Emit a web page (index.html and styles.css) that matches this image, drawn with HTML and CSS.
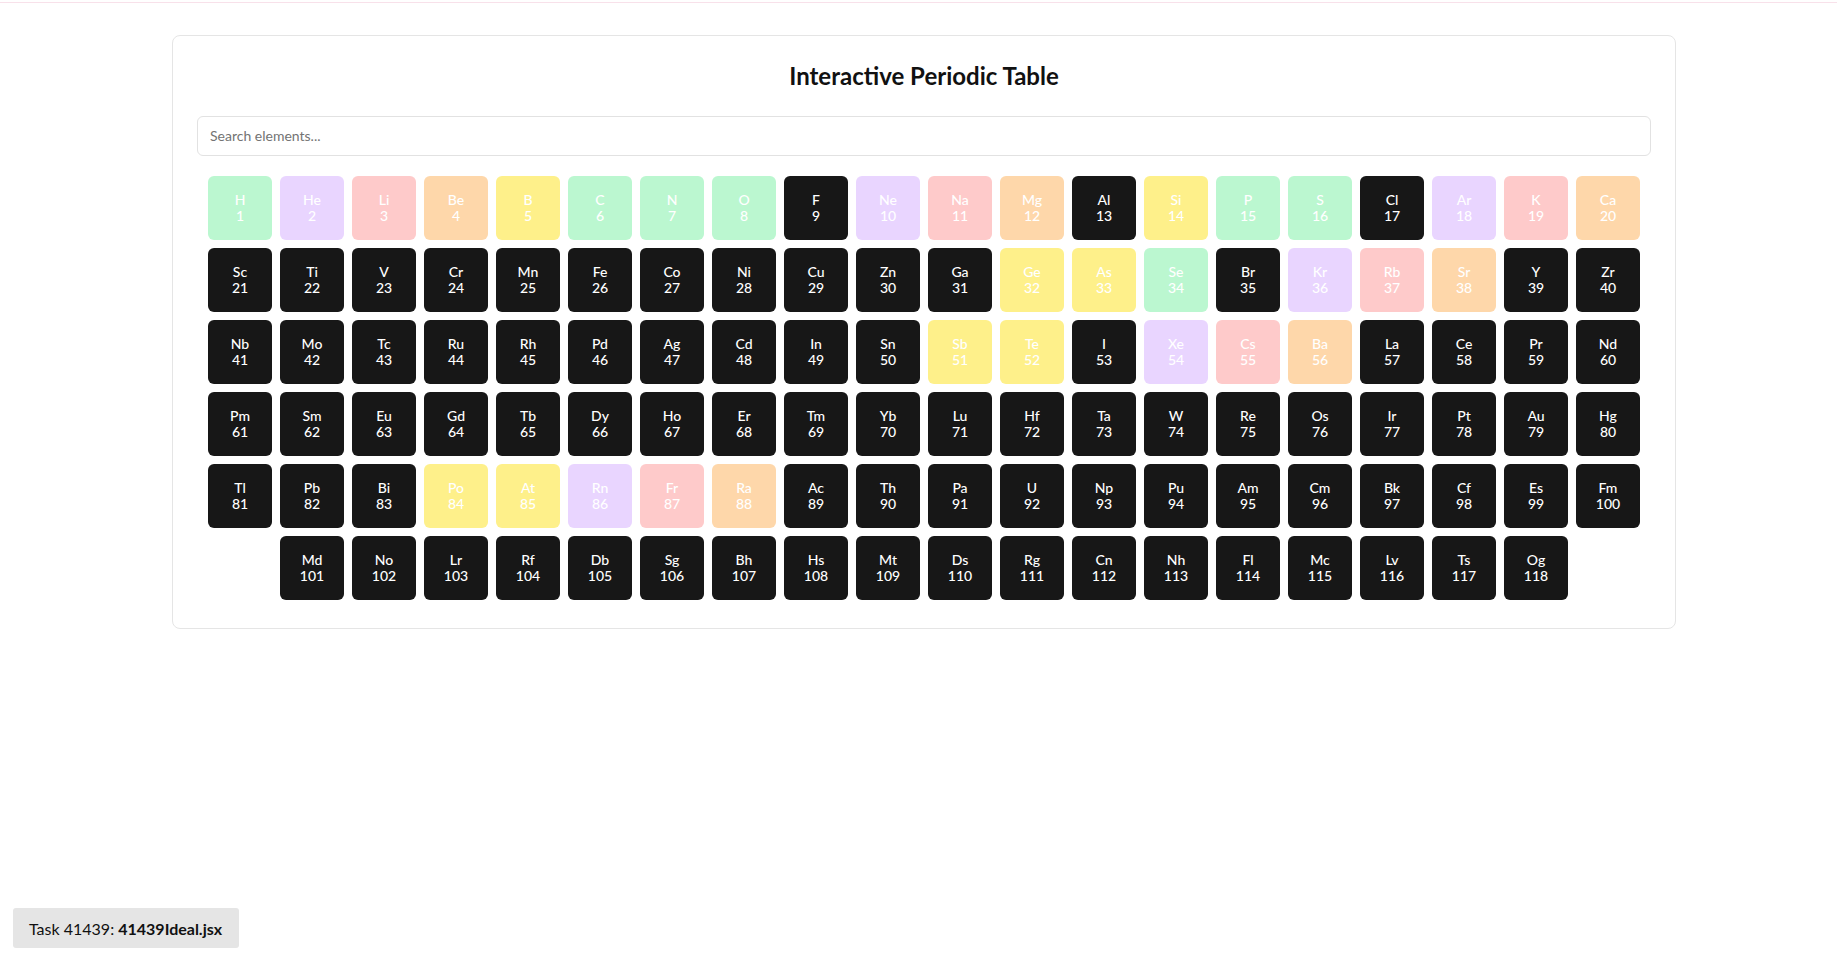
FILE: index.html
```html
<!DOCTYPE html>
<html lang="en">
<head>
<meta charset="utf-8">
<title>Interactive Periodic Table</title>
<link rel="stylesheet" href="styles.css">
</head>
<body>
<div class="topline"></div>
<main class="page">
  <section class="card">
    <h1 class="title">Interactive Periodic Table</h1>
    <input class="search" type="text" placeholder="Search elements...">
    <div class="grid">
      <div class="tile t-green"><span>H</span><span>1</span></div>
      <div class="tile t-purple"><span>He</span><span>2</span></div>
      <div class="tile t-red"><span>Li</span><span>3</span></div>
      <div class="tile t-orange"><span>Be</span><span>4</span></div>
      <div class="tile t-yellow"><span>B</span><span>5</span></div>
      <div class="tile t-green"><span>C</span><span>6</span></div>
      <div class="tile t-green"><span>N</span><span>7</span></div>
      <div class="tile t-green"><span>O</span><span>8</span></div>
      <div class="tile t-dark"><span>F</span><span>9</span></div>
      <div class="tile t-purple"><span>Ne</span><span>10</span></div>
      <div class="tile t-red"><span>Na</span><span>11</span></div>
      <div class="tile t-orange"><span>Mg</span><span>12</span></div>
      <div class="tile t-dark"><span>Al</span><span>13</span></div>
      <div class="tile t-yellow"><span>Si</span><span>14</span></div>
      <div class="tile t-green"><span>P</span><span>15</span></div>
      <div class="tile t-green"><span>S</span><span>16</span></div>
      <div class="tile t-dark"><span>Cl</span><span>17</span></div>
      <div class="tile t-purple"><span>Ar</span><span>18</span></div>
      <div class="tile t-red"><span>K</span><span>19</span></div>
      <div class="tile t-orange"><span>Ca</span><span>20</span></div>
      <div class="tile t-dark"><span>Sc</span><span>21</span></div>
      <div class="tile t-dark"><span>Ti</span><span>22</span></div>
      <div class="tile t-dark"><span>V</span><span>23</span></div>
      <div class="tile t-dark"><span>Cr</span><span>24</span></div>
      <div class="tile t-dark"><span>Mn</span><span>25</span></div>
      <div class="tile t-dark"><span>Fe</span><span>26</span></div>
      <div class="tile t-dark"><span>Co</span><span>27</span></div>
      <div class="tile t-dark"><span>Ni</span><span>28</span></div>
      <div class="tile t-dark"><span>Cu</span><span>29</span></div>
      <div class="tile t-dark"><span>Zn</span><span>30</span></div>
      <div class="tile t-dark"><span>Ga</span><span>31</span></div>
      <div class="tile t-yellow"><span>Ge</span><span>32</span></div>
      <div class="tile t-yellow"><span>As</span><span>33</span></div>
      <div class="tile t-green"><span>Se</span><span>34</span></div>
      <div class="tile t-dark"><span>Br</span><span>35</span></div>
      <div class="tile t-purple"><span>Kr</span><span>36</span></div>
      <div class="tile t-red"><span>Rb</span><span>37</span></div>
      <div class="tile t-orange"><span>Sr</span><span>38</span></div>
      <div class="tile t-dark"><span>Y</span><span>39</span></div>
      <div class="tile t-dark"><span>Zr</span><span>40</span></div>
      <div class="tile t-dark"><span>Nb</span><span>41</span></div>
      <div class="tile t-dark"><span>Mo</span><span>42</span></div>
      <div class="tile t-dark"><span>Tc</span><span>43</span></div>
      <div class="tile t-dark"><span>Ru</span><span>44</span></div>
      <div class="tile t-dark"><span>Rh</span><span>45</span></div>
      <div class="tile t-dark"><span>Pd</span><span>46</span></div>
      <div class="tile t-dark"><span>Ag</span><span>47</span></div>
      <div class="tile t-dark"><span>Cd</span><span>48</span></div>
      <div class="tile t-dark"><span>In</span><span>49</span></div>
      <div class="tile t-dark"><span>Sn</span><span>50</span></div>
      <div class="tile t-yellow"><span>Sb</span><span>51</span></div>
      <div class="tile t-yellow"><span>Te</span><span>52</span></div>
      <div class="tile t-dark"><span>I</span><span>53</span></div>
      <div class="tile t-purple"><span>Xe</span><span>54</span></div>
      <div class="tile t-red"><span>Cs</span><span>55</span></div>
      <div class="tile t-orange"><span>Ba</span><span>56</span></div>
      <div class="tile t-dark"><span>La</span><span>57</span></div>
      <div class="tile t-dark"><span>Ce</span><span>58</span></div>
      <div class="tile t-dark"><span>Pr</span><span>59</span></div>
      <div class="tile t-dark"><span>Nd</span><span>60</span></div>
      <div class="tile t-dark"><span>Pm</span><span>61</span></div>
      <div class="tile t-dark"><span>Sm</span><span>62</span></div>
      <div class="tile t-dark"><span>Eu</span><span>63</span></div>
      <div class="tile t-dark"><span>Gd</span><span>64</span></div>
      <div class="tile t-dark"><span>Tb</span><span>65</span></div>
      <div class="tile t-dark"><span>Dy</span><span>66</span></div>
      <div class="tile t-dark"><span>Ho</span><span>67</span></div>
      <div class="tile t-dark"><span>Er</span><span>68</span></div>
      <div class="tile t-dark"><span>Tm</span><span>69</span></div>
      <div class="tile t-dark"><span>Yb</span><span>70</span></div>
      <div class="tile t-dark"><span>Lu</span><span>71</span></div>
      <div class="tile t-dark"><span>Hf</span><span>72</span></div>
      <div class="tile t-dark"><span>Ta</span><span>73</span></div>
      <div class="tile t-dark"><span>W</span><span>74</span></div>
      <div class="tile t-dark"><span>Re</span><span>75</span></div>
      <div class="tile t-dark"><span>Os</span><span>76</span></div>
      <div class="tile t-dark"><span>Ir</span><span>77</span></div>
      <div class="tile t-dark"><span>Pt</span><span>78</span></div>
      <div class="tile t-dark"><span>Au</span><span>79</span></div>
      <div class="tile t-dark"><span>Hg</span><span>80</span></div>
      <div class="tile t-dark"><span>Tl</span><span>81</span></div>
      <div class="tile t-dark"><span>Pb</span><span>82</span></div>
      <div class="tile t-dark"><span>Bi</span><span>83</span></div>
      <div class="tile t-yellow"><span>Po</span><span>84</span></div>
      <div class="tile t-yellow"><span>At</span><span>85</span></div>
      <div class="tile t-purple"><span>Rn</span><span>86</span></div>
      <div class="tile t-red"><span>Fr</span><span>87</span></div>
      <div class="tile t-orange"><span>Ra</span><span>88</span></div>
      <div class="tile t-dark"><span>Ac</span><span>89</span></div>
      <div class="tile t-dark"><span>Th</span><span>90</span></div>
      <div class="tile t-dark"><span>Pa</span><span>91</span></div>
      <div class="tile t-dark"><span>U</span><span>92</span></div>
      <div class="tile t-dark"><span>Np</span><span>93</span></div>
      <div class="tile t-dark"><span>Pu</span><span>94</span></div>
      <div class="tile t-dark"><span>Am</span><span>95</span></div>
      <div class="tile t-dark"><span>Cm</span><span>96</span></div>
      <div class="tile t-dark"><span>Bk</span><span>97</span></div>
      <div class="tile t-dark"><span>Cf</span><span>98</span></div>
      <div class="tile t-dark"><span>Es</span><span>99</span></div>
      <div class="tile t-dark"><span>Fm</span><span>100</span></div>
      <div class="tile t-dark"><span>Md</span><span>101</span></div>
      <div class="tile t-dark"><span>No</span><span>102</span></div>
      <div class="tile t-dark"><span>Lr</span><span>103</span></div>
      <div class="tile t-dark"><span>Rf</span><span>104</span></div>
      <div class="tile t-dark"><span>Db</span><span>105</span></div>
      <div class="tile t-dark"><span>Sg</span><span>106</span></div>
      <div class="tile t-dark"><span>Bh</span><span>107</span></div>
      <div class="tile t-dark"><span>Hs</span><span>108</span></div>
      <div class="tile t-dark"><span>Mt</span><span>109</span></div>
      <div class="tile t-dark"><span>Ds</span><span>110</span></div>
      <div class="tile t-dark"><span>Rg</span><span>111</span></div>
      <div class="tile t-dark"><span>Cn</span><span>112</span></div>
      <div class="tile t-dark"><span>Nh</span><span>113</span></div>
      <div class="tile t-dark"><span>Fl</span><span>114</span></div>
      <div class="tile t-dark"><span>Mc</span><span>115</span></div>
      <div class="tile t-dark"><span>Lv</span><span>116</span></div>
      <div class="tile t-dark"><span>Ts</span><span>117</span></div>
      <div class="tile t-dark"><span>Og</span><span>118</span></div>
    </div>
  </section>
</main>
<div class="task">Task 41439:&nbsp;<b>41439Ideal.jsx</b></div>
</body>
</html>
```

FILE: styles.css
```css
* { box-sizing: border-box; }
html, body { margin: 0; padding: 0; background: #ffffff; }
body {
  font-family: Lato, "Open Sans", Arial, sans-serif;
  color: #111111;
}
.topline {
  height: 1px;
  margin-top: 2px;
  background: #f8e1ea;
}
.page {
  padding: 32px 161px 40px 172px;
}
.card {
  border: 1px solid #e5e5e5;
  border-radius: 8px;
  padding: 24px;
  background: #ffffff;
}
.title {
  margin: 0 0 24px 0;
  text-align: center;
  font-size: 24px;
  line-height: 32px;
  font-weight: 700;
  color: #111111;
}
.search {
  display: block;
  width: 100%;
  height: 40px;
  padding: 0 12px 1px 12px;
  border: 1px solid #e2e2e2;
  border-radius: 6px;
  font-family: inherit;
  font-size: 14px;
  color: #111111;
  background: #ffffff;
  outline: none;
}
.search::placeholder { color: #737373; }
.grid {
  margin-top: 16px;
  padding: 4px;
  display: flex;
  flex-wrap: wrap;
  justify-content: center;
  gap: 8px;
}
.tile {
  width: 64px;
  height: 64px;
  border-radius: 6px;
  display: flex;
  flex-direction: column;
  align-items: center;
  justify-content: center;
  font-size: 14px;
  line-height: 16px;
  font-weight: 500;
  color: #ffffff;
}
.t-green { background: #bbf7d0; }
.t-purple { background: #e9d5ff; }
.t-red { background: #fecaca; }
.t-orange { background: #fed7aa; }
.t-yellow { background: #fef08a; }
.t-dark { background: #171717; }
.task {
  position: fixed;
  left: 13px;
  bottom: 14px;
  height: 40px;
  padding: 0 17px 0 16px;
  display: flex;
  align-items: center;
  background: #e5e5e5;
  border-radius: 3px;
  font-size: 16px;
  color: #111111;
}
.task b { font-weight: 700; }
```
